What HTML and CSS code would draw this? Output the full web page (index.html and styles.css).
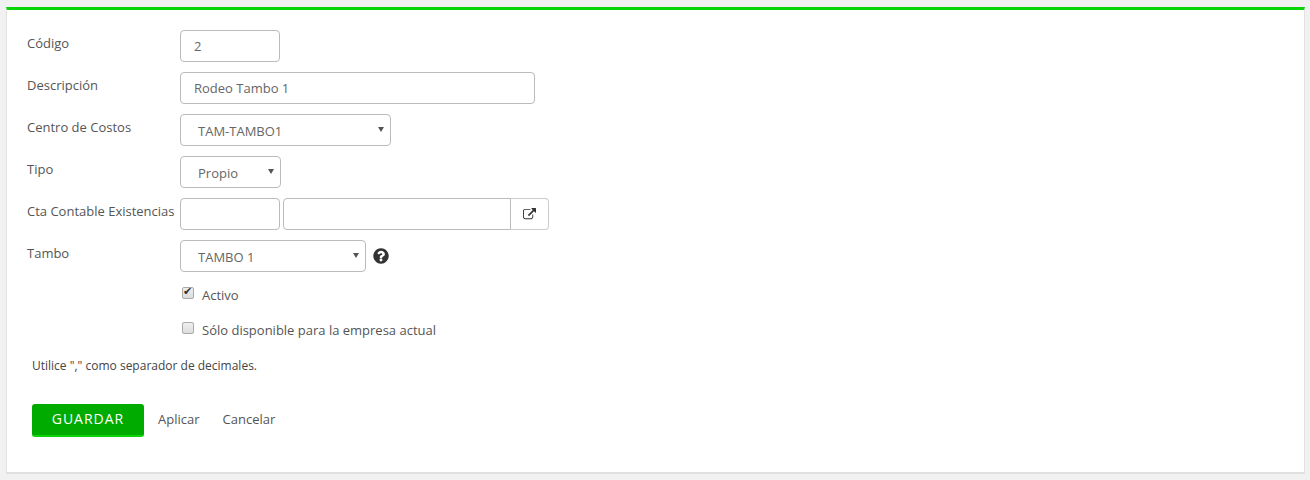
FILE: index.html
```html
<!DOCTYPE html>
<html lang="es">
<head>
<meta charset="UTF-8">
<title>Rodeo</title>
<link rel="stylesheet" href="styles.css">
</head>
<body>
<div class="panel">
  <form class="form">
    <div class="row">
      <label class="lbl">Código</label>
      <input type="text" class="ctl w100" value="2">
    </div>
    <div class="row">
      <label class="lbl">Descripción</label>
      <input type="text" class="ctl w355" value="Rodeo Tambo 1">
    </div>
    <div class="row">
      <label class="lbl">Centro de Costos</label>
      <div class="sel w211"><select class="ctl"><option>TAM-TAMBO1</option></select></div>
    </div>
    <div class="row">
      <label class="lbl">Tipo</label>
      <div class="sel w101"><select class="ctl"><option>Propio</option></select></div>
    </div>
    <div class="row">
      <label class="lbl">Cta Contable Existencias</label>
      <input type="text" class="ctl w100">
      <div class="group">
        <input type="text" class="ctl w228">
        <button type="button" class="addon">
          <svg class="ico13" viewBox="0 0 1792 1792"><path d="M1408 928v320q0 119-84.5 203.5t-203.5 84.5h-832q-119 0-203.5-84.5t-84.5-203.5v-832q0-119 84.5-203.5t203.5-84.5h704q14 0 23 9t9 23v64q0 14-9 23t-23 9h-704q-66 0-113 47t-47 113v832q0 66 47 113t113 47h832q66 0 113-47t47-113v-320q0-14 9-23t23-9h64q14 0 23 9t9 23zm384-864v512q0 26-19 45t-45 19-45-19l-176-176-652 652q-10 10-23 10t-23-10l-114-114q-10-10-10-23t10-23l652-652-176-176q-19-19-19-45t19-45 45-19h512q26 0 45 19t19 45z"/></svg>
        </button>
      </div>
    </div>
    <div class="row">
      <label class="lbl">Tambo</label>
      <div class="sel w186"><select class="ctl"><option>TAMBO 1</option></select></div>
      <svg class="help" viewBox="0 0 1792 1792"><path d="M1024 1376v-192q0-14-9-23t-23-9h-192q-14 0-23 9t-9 23v192q0 14 9 23t23 9h192q14 0 23-9t9-23zm256-672q0-88-55.5-163t-138.5-116-170-41q-243 0-371 213-15 24 8 42l132 100q7 6 19 6 16 0 25-12 53-68 86-92 34-24 86-24 48 0 85.5 26t37.5 59q0 38-20 61t-68 45q-63 28-115.5 86.5t-52.5 125.5v36q0 14 9 23t23 9h192q14 0 23-9t9-23q0-19 21.5-49.5t54.5-49.5q32-18 49-28.5t46-35 44.5-48 28-60.5 12.5-81zm384 192q0 209-103 385.5t-279.5 279.5-385.5 103-385.5-103-279.5-279.5-103-385.5 103-385.5 279.5-279.5 385.5-103 385.5 103 279.5 279.5 103 385.5z"/></svg>
    </div>
    <div class="checks">
      <label class="chk"><input type="checkbox" checked> Activo</label>
      <label class="chk"><input type="checkbox"> Sólo disponible para la empresa actual</label>
    </div>
    <p class="note">Utilice "," como separador de decimales.</p>
    <div class="actions">
      <button type="button" class="btn-save">GUARDAR</button>
      <a class="link" href="#">Aplicar</a>
      <a class="link" href="#">Cancelar</a>
    </div>
  </form>
</div>
</body>
</html>
```

FILE: styles.css
```css
html, body {
  margin: 0;
  padding: 0;
}

body {
  background: #f1f1f1;
  font-family: "Open Sans", sans-serif;
  font-size: 13px;
  color: #555;
  height: 480px;
  overflow: hidden;
  padding: 7px 5px 0 6px;
  box-sizing: border-box;
}

.panel {
  background: #fff;
  border-top: 3px solid #05d505;
  border-left: 1px solid #e2e2e2;
  border-right: 1px solid #e2e2e2;
  border-bottom: 2px solid #e0e0e0;
  height: 467px;
  box-sizing: border-box;
}

.form {
  padding: 20px 0 0 20px;
}

.row {
  display: flex;
  align-items: flex-start;
  margin-bottom: 10px;
}

.lbl {
  width: 153px;
  flex: none;
  line-height: 18px;
  padding-top: 4px;
  color: #555;
}

.ctl {
  display: block;
  height: 32px;
  box-sizing: border-box;
  border: 1px solid #bbb;
  border-radius: 4px;
  background: #fff;
  padding: 0 13px;
  font-family: inherit;
  font-size: 13px;
  color: #666;
  outline: none;
}

.w100 { width: 100px; }
.w355 { width: 355px; }
.w228 { width: 228px; }
.w211 { width: 211px; }
.w186 { width: 186px; }
.w101 { width: 101px; }

.sel {
  position: relative;
}

.sel select {
  width: 100%;
  appearance: none;
  padding: 2px 13px 0 17px;
}

.sel::after {
  content: "";
  position: absolute;
  top: 13px;
  right: 7px;
  border-left: 3px solid transparent;
  border-right: 3px solid transparent;
  border-top: 5px solid #555;
}

.group {
  display: flex;
  margin-left: 3px;
}

.group .ctl {
  border-radius: 4px 0 0 4px;
}

.addon {
  width: 38px;
  height: 32px;
  box-sizing: border-box;
  background: #fff;
  border: 1px solid #ccc;
  border-left: 0;
  border-radius: 0 4px 4px 0;
  padding: 0;
  display: flex;
  align-items: center;
  justify-content: center;
}

.ico13 {
  width: 13px;
  height: 13px;
  fill: #333;
}

.help {
  width: 18px;
  height: 18px;
  fill: #333;
  margin: 7px 0 0 6px;
}

.checks {
  padding: 3px 0 0 155px;
}

.chk {
  display: flex;
  align-items: center;
  height: 20px;
  margin-bottom: 15px;
  gap: 8px;
  color: #555;
}

.chk input {
  appearance: none;
  width: 12px;
  height: 12px;
  margin: 0 0 5px 0;
  border: 1px solid #aaa;
  border-radius: 2px;
  background: linear-gradient(#eee, #ddd);
  position: relative;
}

.chk input:checked::after {
  content: "✔";
  position: absolute;
  left: 0;
  top: -3px;
  font-family: "DejaVu Sans", sans-serif;
  font-size: 11px;
  line-height: 14px;
  color: #333;
}

.note {
  margin: 18px 0 0 5px;
  font-size: 12px;
  line-height: 16px;
  color: #444;
}

.actions {
  display: flex;
  align-items: center;
  gap: 23px;
  margin: 30px 0 0 5px;
}

.btn-save {
  width: 112px;
  height: 33px;
  background: #00ab00;
  color: #fff;
  border: 0;
  border-bottom: 2px solid #0ad60a;
  border-radius: 3px;
  font-family: inherit;
  font-size: 14px;
  font-weight: 400;
  letter-spacing: 1px;
  margin-right: -9px;
  padding: 0 0 2px;
}

.link {
  color: #555;
  text-decoration: none;
  margin-bottom: 4px;
}
```
